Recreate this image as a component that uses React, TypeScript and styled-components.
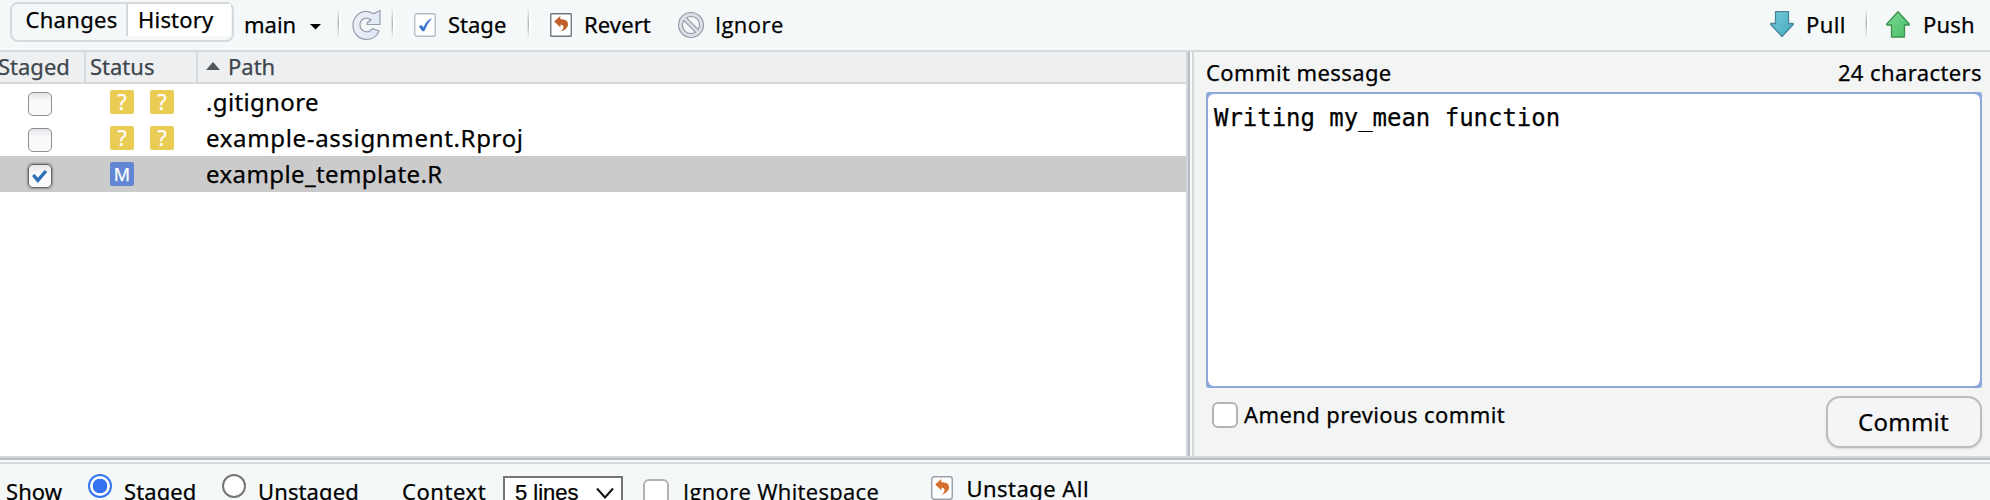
import React from 'react';
import styled, { createGlobalStyle } from 'styled-components';

const GlobalStyle = createGlobalStyle`
  * { box-sizing: border-box; }
  html, body { margin: 0; height: 500px; overflow: hidden; }
  body {
    font-family: "Noto Sans", sans-serif;
    font-size: 22px;
    color: #000;
    background: #f4f8f9;
    -webkit-text-stroke: 0.25px currentColor;
  }
  svg { display: block; flex: none; }
`;

const Window = styled.div`
  display: flex;
  flex-direction: column;
  width: 1990px;
  height: 500px;
  overflow: hidden;
`;

const Toolbar = styled.div`
  display: flex;
  align-items: flex-start;
  height: 52px;
  flex: none;
  background: #f4f8f9;
  border-bottom: 2px solid #d6dadc;
`;

const Segment = styled.div`
  display: flex;
  width: 224px;
  height: 40px;
  margin: 2px 0 0 10px;
  padding-right: 1px;
  border: 2px solid #d6dadc;
  border-radius: 8px;
`;

const SegmentTab = styled.div<{ $active?: boolean; $spacing: number }>`
  width: ${(p) => (p.$active ? 105 : 114)}px;
  height: 32px;
  line-height: 30px;
  white-space: nowrap;
  padding-left: ${(p) => (p.$active ? 10 : 13.5)}px;
  letter-spacing: ${(p) => p.$spacing}px;
  background: ${(p) => (p.$active ? '#fff' : 'transparent')};
  border-left: ${(p) => (p.$active ? '2px solid #d6dadc' : 'none')};
`;

const BranchMenu = styled.div`
  display: flex;
  align-items: center;
  gap: 14px;
  width: 94px;
  height: 50px;
  padding-left: 10px;

  svg {
    margin-top: 4px;
  }
`;

const Divider = styled.div<{ $left?: number }>`
  width: 4px;
  height: 32px;
  margin: 7px 0 0 ${(p) => p.$left ?? 0}px;
  flex: none;
  background: linear-gradient(rgba(244, 248, 249, 1), rgba(244, 248, 249, 0) 45%, rgba(244, 248, 249, 0) 60%, rgba(244, 248, 249, 1)),
    linear-gradient(90deg, #dcdfe0 0 1px, #b9bcbd 1px 2px, #fff 2px 4px);
`;

const ToolButton = styled.div<{ $left: number; $gap?: number; $spacing?: number; $sans?: boolean }>`
  display: flex;
  align-items: center;
  gap: ${(p) => p.$gap ?? 12}px;
  height: 50px;
  margin-left: ${(p) => p.$left}px;
  white-space: nowrap;
  letter-spacing: ${(p) => p.$spacing ?? 0}px;
  font-family: ${(p) => (p.$sans ? '"Open Sans", sans-serif' : 'inherit')};
`;

const ToolText = styled.span`
  margin-top: -2px;
`;

const ToolGroup = styled.div<{ $width: number }>`
  display: flex;
  width: ${(p) => p.$width}px;
  flex: none;
`;

const Panes = styled.div`
  display: flex;
  height: 404px;
  flex: none;
`;

const FilePane = styled.div`
  width: 1186px;
  background: #fff;
`;

const FileHeader = styled.div`
  display: grid;
  grid-template-columns: 86px 112px 1fr;
  height: 32px;
  background: #edeff1;
  border-bottom: 2px solid #d6dadc;
  color: #3d464d;
  -webkit-text-stroke-color: #3d464d;
`;

const HeaderCell = styled.div<{ $pad: number; $last?: boolean }>`
  display: flex;
  align-items: center;
  gap: 8px;
  height: 30px;
  line-height: 28px;
  padding-bottom: 2px;
  white-space: nowrap;
  padding-left: ${(p) => Math.max(p.$pad, 0)}px;
  text-indent: ${(p) => Math.min(p.$pad, 0)}px;
  border-right: ${(p) => (p.$last ? 'none' : '2px solid #d6dadc')};
`;

const FileRow = styled.div<{ $selected?: boolean }>`
  display: grid;
  grid-template-columns: 110px 96px 1fr;
  height: 36px;
  background: ${(p) => (p.$selected ? '#cbcbcb' : '#fff')};
`;

const StageBox = styled.div<{ $checked?: boolean }>`
  width: 24px;
  height: 24px;
  margin: 8px 0 0 28px;
  border: 1.5px solid ${(p) => (p.$checked ? '#65656a' : '#8e8e92')};
  border-radius: 5px;
  background: linear-gradient(#e6e6e9, #fafafc 38%, #fafafc);
  box-shadow: ${(p) => (p.$checked ? '0 0 2px 1px rgba(80,80,80,.45)' : 'none')};
`;

const Badges = styled.div`
  display: flex;
  gap: 16px;
  padding-top: 6px;
`;

const Badge = styled.span<{ $modified?: boolean }>`
  width: 24px;
  height: 24px;
  border-radius: 2px;
  background: ${(p) => (p.$modified ? '#6187d4' : '#eacc55')};
  color: #fff;
  font-size: ${(p) => (p.$modified ? 18 : 21)}px;
  line-height: 24px;
  text-align: center;
`;

const FileName = styled.div<{ $spacing: number }>`
  font-size: 24px;
  line-height: 36px;
  white-space: nowrap;
  letter-spacing: ${(p) => p.$spacing}px;
`;

const SplitterV = styled.div`
  width: 8px;
  background: linear-gradient(90deg, #d3d7da 0 2px, #b6bfc7 2px 4px, #f7f9fa 4px 6px, #d6d9dc 6px 8px);
`;

const SplitterH = styled.div`
  height: 8px;
  flex: none;
  background: linear-gradient(#d3d7da 0 2px, #b6bfc7 2px 4px, #f7f9fa 4px 6px, #d6dadc 6px 8px);
`;

const CommitPane = styled.div`
  display: flex;
  flex-direction: column;
  width: 796px;
  padding: 0 8px 0 12px;
  background: #f3f4f4;
`;

const CommitHeader = styled.div`
  display: flex;
  justify-content: space-between;
  height: 40px;
  line-height: 40px;
  letter-spacing: 0.4px;
`;

const MessageFrame = styled.div`
  height: 296px;
  padding: 2px;
  border-radius: 3px;
  background: #8fa8dc;
`;

const Message = styled.div`
  height: 292px;
  padding: 8px 6px;
  border-radius: 6px;
  background: #fff;
  font-family: "DejaVu Sans Mono", monospace;
  font-size: 24px;
  line-height: 32px;
  letter-spacing: -0.03px;
`;

const CommitFooter = styled.div`
  display: flex;
  justify-content: space-between;
`;

const CheckLabel = styled.div`
  display: flex;
  gap: 6px;
  padding: 14px 0 0 6px;
  line-height: 24px;
  letter-spacing: 0.4px;
`;

const Check = styled.span`
  width: 26px;
  height: 26px;
  flex: none;
  border: 2px solid #b3b3b3;
  border-radius: 6px;
  background: #fff;
`;

const CommitButton = styled.div`
  width: 156px;
  height: 52px;
  margin-top: 8px;
  padding-right: 1px;
  border: 2px solid #bcbcbc;
  border-radius: 14px;
  background: #f5f5f8;
  box-shadow: 0 1px 2px rgba(0, 0, 0, 0.1);
  font-size: 24px;
  line-height: 48px;
  letter-spacing: 0.25px;
  text-align: center;
`;

const OptionsBar = styled.div`
  display: flex;
  height: 36px;
  background: #f4f8f9;
  overflow: hidden;
`;

const OptionText = styled.div<{ $width: number; $pad?: number; $spacing?: number; $raise?: boolean; $sans?: boolean }>`
  width: ${(p) => p.$width}px;
  flex: none;
  margin-top: ${(p) => (p.$raise ? 8 : 11)}px;
  padding-left: ${(p) => p.$pad ?? 0}px;
  line-height: 32px;
  white-space: nowrap;
  letter-spacing: ${(p) => p.$spacing ?? 0.1}px;
  font-family: ${(p) => (p.$sans ? '"Open Sans", sans-serif' : 'inherit')};
`;

const Radio = styled.span<{ $on?: boolean }>`
  width: 24px;
  height: 24px;
  flex: none;
  margin: 10px 12px 0 0;
  border: 2px solid ${(p) => (p.$on ? '#3573f0' : '#767676')};
  border-radius: 50%;
  background: ${(p) => (p.$on ? 'radial-gradient(circle, #3573f0 0 7px, #fff 7.6px)' : '#fff')};
`;

const Select = styled.div`
  display: flex;
  justify-content: space-between;
  width: 120px;
  height: 40px;
  flex: none;
  margin: 12px 20px 0 0;
  padding: 0 7px 0 10px;
  border: 2px solid #757575;
  background: #fff;
  font-family: "Liberation Sans", sans-serif;
  font-size: 22px;
  line-height: 30px;
`;

const OptionCheck = styled(Check)`
  margin: 15px 14px 0 0;
`;

const IconSlot = styled.div`
  width: 35px;
  padding-top: 12px;
  flex: none;
`;

const RefreshIcon = () => (
  <svg width="30" height="32" viewBox="0 0 30 32">
    <defs>
      <linearGradient id="refresh" x1="0" y1="0" x2="1" y2="1">
        <stop offset="0" stopColor="#eef0f3" />
        <stop offset="1" stopColor="#dce6fa" />
      </linearGradient>
    </defs>
    <path
      d="M20.5 4.2 Q23.5 5 24.3 3.3 L28 1.5 V15.5 H15 V14 L19 10.8 C13.5 6.8 8 10.6 8 16 C8 22.2 16 25.2 19.6 20.3 C21 18.8 23 20.8 27 21.8 C25 27.5 20 30.7 14.5 30.5 C6.5 30.3 1 24 1 16.5 C1 6 11 -1 20.5 4.2Z"
      fill="url(#refresh)"
      stroke="#969dab"
      strokeWidth="1.2"
      strokeLinejoin="round"
    />
  </svg>
);

const StageIcon = () => (
  <svg width="22" height="24" viewBox="0 0 22 24">
    <rect x=".75" y=".75" width="20.5" height="22.5" rx="2" fill="#fff" stroke="#b4bac2" strokeWidth="1.3" />
    <path d="M5 13.5 Q7 11.5 8.4 12.7 L9.4 14.4 Q12.5 7 18 5.2 Q13.2 10.5 10.8 17.3 Q9 19.5 7.8 17.4Z" fill="#3b74d0" />
  </svg>
);

const RevertIcon = ({ soft }: { soft?: boolean }) => (
  <svg width="22" height="24" viewBox="0 0 22 24">
    <rect x=".75" y=".75" width="20.5" height="22.5" rx={soft ? 2.5 : 0.5} fill="#fff" stroke={soft ? '#9a9fa8' : '#737780'} strokeWidth="1.4" />
    <path
      d="M4.2 8.5 L10.3 3 V6.3 C16 6.2 18.2 8.5 18 11.5 C17.8 14.8 14.5 17.8 11 18.3 C13.8 16.2 15.2 12.4 10.5 11.6 V14.5Z"
      fill={soft ? '#d96f2d' : '#c0602a'}
    />
  </svg>
);

const IgnoreIcon = () => (
  <svg width="26" height="26" viewBox="0 0 26 26">
    <circle cx="13" cy="13" r="10.5" fill="none" stroke="#8e96a5" strokeWidth="5" />
    <path d="M6 6 L20 20" stroke="#8e96a5" strokeWidth="5" />
    <circle cx="13" cy="13" r="10.5" fill="none" stroke="#dcdee4" strokeWidth="2.8" />
    <path d="M5.5 5.5 L20.5 20.5" stroke="#dcdee4" strokeWidth="2.8" />
  </svg>
);

const ArrowIcon = ({ up }: { up?: boolean }) => {
  const id = up ? 'arrow-up' : 'arrow-down';
  return (
    <svg width="24" height="28" viewBox="0 0 24 28">
      <defs>
        <linearGradient id={id} x1="0" y1="0" x2="1" y2="1">
          <stop offset="0" stopColor={up ? '#7fdc92' : '#78cbda'} />
          <stop offset="1" stopColor={up ? '#45bd68' : '#42a8be'} />
        </linearGradient>
      </defs>
      <path
        d={up ? 'M12 .8 L23.2 13 V14 H18.5 V26 H5.5 V14 H.8 V13Z' : 'M5.5 .7 H18.5 V12.5 H23.2 V13.5 L12 25.5 L.8 13.5 V12.5 H5.5Z'}
        fill={`url(#${id})`}
        stroke={up ? '#3c9150' : '#4a8499'}
        strokeWidth="1.3"
        strokeLinejoin="round"
      />
    </svg>
  );
};

const CaretDown = () => (
  <svg width="11" height="6" viewBox="0 0 11 6">
    <path d="M0 0 H11 L5.5 5.6Z" fill="#000" />
  </svg>
);

const SortIcon = () => (
  <svg width="14" height="8" viewBox="0 0 14 8">
    <path d="M7 0 L14 8 H0Z" fill="#50575d" />
  </svg>
);

const CheckMark = () => (
  <svg width="21" height="21" viewBox="0 0 21 21">
    <path d="M4.3 10 L8.8 15.3 L17 6" fill="none" stroke="#2c6fb7" strokeWidth="3.4" />
  </svg>
);

const Chevron = () => (
  <svg width="18" height="32" viewBox="0 0 18 32">
    <path d="M1 10.5 L9 19.5 L17 10.5" fill="none" stroke="#111" strokeWidth="2" />
  </svg>
);

const files = [
  { name: '.gitignore', status: ['?', '?'], staged: false, spacing: 0.35 },
  { name: 'example-assignment.Rproj', status: ['?', '?'], staged: false, spacing: 0.66 },
  { name: 'example_template.R', status: ['M'], staged: true, spacing: 0.4 },
];

export default function App() {
  return (
    <Window>
      <GlobalStyle />
      <Toolbar>
        <Segment>
          <SegmentTab $spacing={0.3}>Changes</SegmentTab>
          <SegmentTab $active $spacing={0.2}>History</SegmentTab>
        </Segment>
        <BranchMenu>
          <ToolText>main</ToolText>
          <CaretDown />
        </BranchMenu>
        <ToolGroup $width={63}>
          <Divider $left={9} />
          <ToolButton $left={11}>
            <RefreshIcon />
          </ToolButton>
        </ToolGroup>
        <ToolGroup $width={136}>
          <Divider />
          <ToolButton $left={19}>
            <StageIcon />
            <ToolText>Stage</ToolText>
          </ToolButton>
        </ToolGroup>
        <ToolGroup $width={1242}>
          <Divider />
          <ToolButton $left={19} $spacing={0.1}>
            <RevertIcon />
            <ToolText>Revert</ToolText>
          </ToolButton>
          <ToolButton $left={27} $gap={11} $spacing={0.45} $sans>
            <IgnoreIcon />
            <ToolText>Ignore</ToolText>
          </ToolButton>
        </ToolGroup>
        <ToolGroup $width={96}>
          <ToolButton $left={1} $spacing={0.4}>
            <ArrowIcon />
            <ToolText>Pull</ToolText>
          </ToolButton>
        </ToolGroup>
        <ToolGroup $width={124}>
          <Divider />
          <ToolButton $left={17} $gap={13} $spacing={0.2}>
            <ArrowIcon up />
            <ToolText>Push</ToolText>
          </ToolButton>
        </ToolGroup>
      </Toolbar>
      <Panes>
        <FilePane>
          <FileHeader>
            <HeaderCell $pad={-2}>Staged</HeaderCell>
            <HeaderCell $pad={4}>Status</HeaderCell>
            <HeaderCell $pad={8} $last>
              <SortIcon />
              Path
            </HeaderCell>
          </FileHeader>
          {files.map((f) => (
            <FileRow key={f.name} $selected={f.staged}>
              <StageBox $checked={f.staged}>{f.staged && <CheckMark />}</StageBox>
              <Badges>
                {f.status.map((s, i) => (
                  <Badge key={i} $modified={s === 'M'}>{s}</Badge>
                ))}
              </Badges>
              <FileName $spacing={f.spacing}>{f.name}</FileName>
            </FileRow>
          ))}
        </FilePane>
        <SplitterV />
        <CommitPane>
          <CommitHeader>
            <span>Commit message</span>
            <span>24 characters</span>
          </CommitHeader>
          <MessageFrame>
            <Message>Writing my_mean function</Message>
          </MessageFrame>
          <CommitFooter>
            <CheckLabel>
              <Check />
              Amend previous commit
            </CheckLabel>
            <CommitButton>Commit</CommitButton>
          </CommitFooter>
        </CommitPane>
      </Panes>
      <SplitterH />
      <OptionsBar>
        <OptionText $width={88} $pad={6}>Show</OptionText>
        <Radio $on />
        <OptionText $width={98}>Staged</OptionText>
        <Radio />
        <OptionText $width={144}>Unstaged</OptionText>
        <OptionText $width={101} $spacing={0.55}>Context</OptionText>
        <Select>
          5 lines
          <Chevron />
        </Select>
        <OptionCheck />
        <OptionText $width={248} $spacing={0.33} $sans>Ignore Whitespace</OptionText>
        <IconSlot>
          <RevertIcon soft />
        </IconSlot>
        <OptionText $width={200} $spacing={0.45} $pad={0.5} $raise>Unstage All</OptionText>
      </OptionsBar>
    </Window>
  );
}
